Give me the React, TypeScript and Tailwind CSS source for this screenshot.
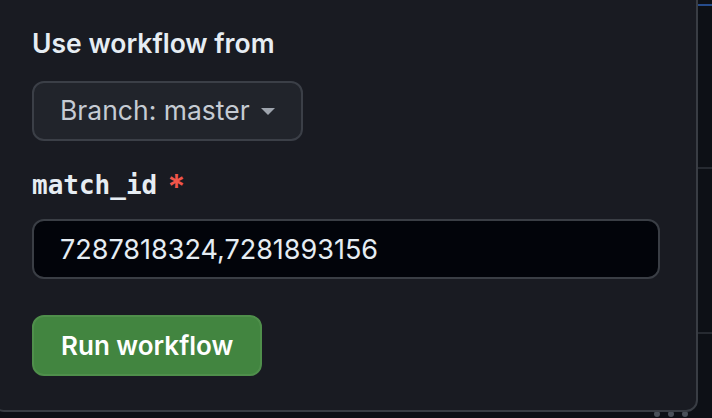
export default function App() {
  return (
    <div className="relative h-[418px] w-[712px] overflow-hidden bg-[#0d1016] font-['Inter',sans-serif]">
      {/* page behind the dropdown */}
      <div className="absolute left-[698px] top-0 h-full w-[14px] bg-[#0d1016]">
        <div className="mt-[4px] h-[2px] bg-[#264c8c]" />
        <div className="mt-[161px] h-[2px] bg-[#262a31]" />
        <div className="mt-[163px] h-[2px] bg-[#262a31]" />
      </div>
      <div className="absolute left-[654px] top-[411px] flex gap-[8px]">
        <span className="h-[6px] w-[6px] rounded-full bg-[#4a5059]" />
        <span className="h-[6px] w-[6px] rounded-full bg-[#4a5059]" />
        <span className="h-[6px] w-[6px] rounded-full bg-[#4a5059]" />
      </div>

      {/* dropdown panel */}
      <div className="absolute left-[-8px] top-[-12px] h-[424px] w-[706px] rounded-[12px] border-2 border-[#393d44] bg-[#191b22] pl-[38px] pt-[35px]">
        <div className="flex flex-col items-start">
          <div className="text-[26.5px] font-semibold leading-[36px] text-[#e6edf3]">Use workflow from</div>

          <button className="mt-[20px] inline-flex h-[60px] items-center gap-[11px] rounded-[12px] border-2 border-[#3b3f47] bg-[#21242b] px-[26px] text-[26.5px] text-[#c5cbd3]">
            <span>Branch: master</span>
            <svg width="14" height="7" viewBox="0 0 14 7">
              <path d="M0 0h14L7 7z" fill="#9ea4ad" />
            </svg>
          </button>

          <label className="mt-[28px] flex h-[32px] items-center gap-[10px] font-['DejaVu_Sans_Mono',monospace] text-[26px] font-bold leading-[32px] text-[#e6edf3]">
            match_id
            <span className="mt-[4px] font-['Inter',sans-serif] text-[34px] font-semibold text-[#f0554a]">*</span>
          </label>

          <input
            readOnly
            value="7287818324,7281893156"
            className="mt-[18px] h-[60px] w-[628px] rounded-[12px] border-2 border-[#3a3e45] bg-[#02040a] px-[26px] text-[27px] text-[#e6edf3] outline-none"
          />

          <button className="mt-[36px] h-[61px] rounded-[12px] border-2 border-[#4f8f4b] bg-[#428540] px-[27px] text-[26px] font-semibold text-white">
            Run workflow
          </button>
        </div>
      </div>
    </div>
  );
}
